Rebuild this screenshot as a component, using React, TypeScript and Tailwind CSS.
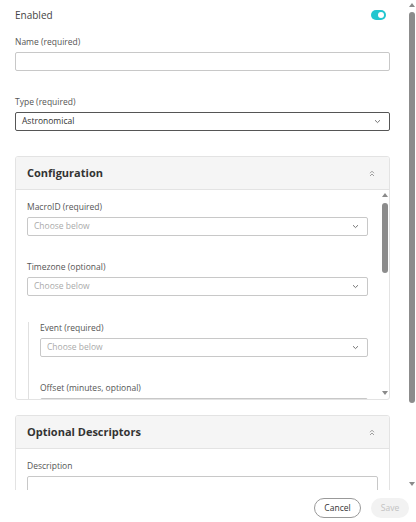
import React from 'react';

function Caret({ up = false, className = '' }: { up?: boolean; className?: string }) {
  return (
    <svg width="6" height="4" viewBox="0 0 6 4" className={className}>
      {up ? <path d="M0 4 L3 0 L6 4 Z" fill="#8a8a8a" /> : <path d="M0 0 L6 0 L3 4 Z" fill="#8a8a8a" />}
    </svg>
  );
}

function ChevronDown() {
  return (
    <svg width="7" height="5" viewBox="0 0 7 5" className="shrink-0">
      <path d="M1 1.2 L3.5 3.6 L6 1.2" fill="none" stroke="#666" strokeWidth="0.9" />
    </svg>
  );
}

function ChevronsUp() {
  return (
    <svg width="6" height="7" viewBox="0 0 6 7" className="shrink-0">
      <path d="M1 3.2 L3 1.2 L5 3.2 M1 6 L3 4 L5 6" fill="none" stroke="#888" strokeWidth="0.8" />
    </svg>
  );
}

function Scrollbar({ thumbTop, thumbHeight }: { thumbTop: number; thumbHeight: number }) {
  return (
    <div className="w-[8px] shrink-0 flex flex-col items-center pt-[3px] pb-[4px]">
      <Caret up />
      <div className="w-[6px] rounded-full bg-[#8c8c8c]" style={{ marginTop: thumbTop, height: thumbHeight }} />
      <div className="flex-1" />
      <Caret />
    </div>
  );
}

function Label({ children, className = '' }: { children: React.ReactNode; className?: string }) {
  return <div className={`text-[8.5px] leading-[12px] text-[#555] mb-[4px] ${className}`}>{children}</div>;
}

function Select({ value, placeholder, active = false }: { value?: string; placeholder?: string; active?: boolean }) {
  return (
    <div
      className={`h-[19px] rounded-[2px] border flex items-center justify-between pl-[6px] pr-[8px] ${
        active ? 'border-[#555]' : 'border-[#c8c8c8]'
      }`}
    >
      <span className={`text-[8.5px] ${value ? 'text-[#333]' : 'text-[#aaa]'}`}>{value || placeholder}</span>
      <ChevronDown />
    </div>
  );
}

function CardHeader({ title }: { title: string }) {
  return (
    <div className="h-[33px] bg-[#f5f5f5] border-b border-[#e3e3e3] flex items-center justify-between pl-[11px] pr-[14px]">
      <span className="text-[11px] font-bold text-[#333]">{title}</span>
      <ChevronsUp />
    </div>
  );
}

export default function App() {
  return (
    <div className="w-[416px] h-[522px] flex flex-col bg-white font-['Open_Sans',sans-serif] overflow-hidden">
      <div className="flex h-[490px] overflow-hidden">
        <div className="flex-1 overflow-hidden pl-[15px] pr-[18px] pt-[7px]">
          <div className="h-[16px] flex items-center justify-between">
            <span className="text-[10px] text-[#444]">Enabled</span>
            <div className="w-[15px] h-[10px] rounded-full bg-[#22c6cf] flex items-center justify-end pr-[2px] mr-[4px]">
              <div className="w-[6px] h-[6px] rounded-full bg-white" />
            </div>
          </div>

          <Label className="mt-[13px]">Name (required)</Label>
          <div className="h-[19px] rounded-[2px] border border-[#c8c8c8]" />

          <Label className="mt-[25px]">Type (required)</Label>
          <Select value="Astronomical" active />

          <div className="mt-[25px] border border-[#e3e3e3] rounded-[3px] overflow-hidden">
            <CardHeader title="Configuration" />
            <div className="h-[209px] flex">
              <div className="flex-1 overflow-hidden pl-[11px] pr-[13px] pt-[11px]">
                <Label>MacroID (required)</Label>
                <Select placeholder="Choose below" />

                <Label className="mt-[25px]">Timezone (optional)</Label>
                <Select placeholder="Choose below" />

                <div className="mt-[26px] ml-[1px] border-l border-[#e0e0e0] pl-[11px] pb-[20px]">
                  <Label>Event (required)</Label>
                  <Select placeholder="Choose below" />

                  <Label className="mt-[25px]">Offset (minutes, optional)</Label>
                  <div className="h-[19px] rounded-[2px] border border-[#c8c8c8]" />
                </div>
              </div>
              <Scrollbar thumbTop={6} thumbHeight={70} />
            </div>
          </div>

          <div className="mt-[15px] border border-[#e3e3e3] rounded-[3px] overflow-hidden">
            <CardHeader title="Optional Descriptors" />
            <div className="pl-[11px] pr-[11px] pt-[11px]">
              <Label>Description</Label>
              <div className="h-[40px] rounded-[2px] border border-[#c8c8c8]" />
            </div>
          </div>
        </div>
        <Scrollbar thumbTop={5} thumbHeight={391} />
      </div>

      <div className="flex-1 flex justify-end items-start gap-[10px] pr-[7px] pt-[8px]">
        <button className="h-[20px] w-[47px] rounded-full border border-[#999] text-[8.5px] text-[#333] bg-white">
          Cancel
        </button>
        <button className="h-[20px] w-[38px] rounded-full bg-[#f2f2f2] text-[8.5px] text-[#c2c2c2]">Save</button>
      </div>
    </div>
  );
}
